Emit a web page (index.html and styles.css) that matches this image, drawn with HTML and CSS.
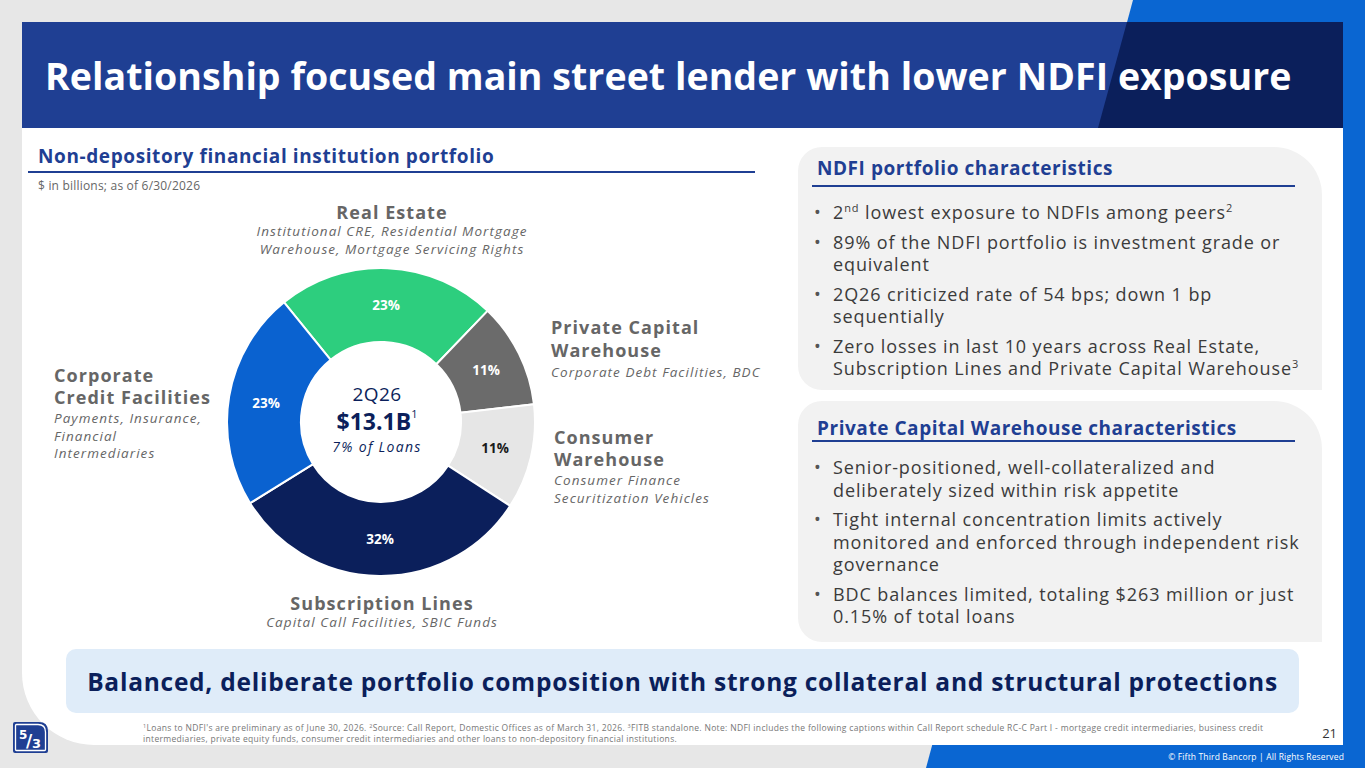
FILE: index.html
```html
<!DOCTYPE html>
<html lang="en">
<head>
<meta charset="utf-8">
<title>Relationship focused main street lender</title>
<link rel="stylesheet" href="styles.css">
</head>
<body>
<div class="backdrop"></div>
<div class="card">
  <header class="header">
    <h1>Relationship focused main street lender with lower NDFI exposure</h1>
  </header>
  <div class="main">
    <section class="left">
      <h2 class="sec-title">Non-depository financial institution portfolio</h2>
      <p class="note">$ in billions; as of 6/30/2026</p>
      <div class="chart">
        <svg class="donut" width="320" height="320" viewBox="0 0 320 320">
          <g stroke="#fff" stroke-width="2" stroke-linejoin="round">
            <path fill="#2dce7e" d="M63.09 40.33 A154 154 0 0 1 266.58 48.84 L215.37 102.26 A80 80 0 0 0 109.66 97.83 Z"/>
            <path fill="#6b6b6b" d="M266.58 48.84 A154 154 0 0 1 312.98 142.30 L239.47 150.81 A80 80 0 0 0 215.37 102.26 Z"/>
            <path fill="#e6e6e6" d="M312.98 142.30 A154 154 0 0 1 289.16 243.87 L227.10 203.57 A80 80 0 0 0 239.47 150.81 Z"/>
            <path fill="#0b1f5b" d="M289.16 243.87 A154 154 0 0 1 29.12 241.16 L92.01 202.16 A80 80 0 0 0 227.10 203.57 Z"/>
            <path fill="#0a62d0" d="M29.12 241.16 A154 154 0 0 1 63.09 40.33 L109.66 97.83 A80 80 0 0 0 92.01 202.16 Z"/>
          </g>
          <g class="pct">
            <text x="165" y="43" fill="#fff">23%</text>
            <text x="265" y="108" fill="#fff">11%</text>
            <text x="274" y="186" fill="#1a1a1a">11%</text>
            <text x="159" y="277" fill="#fff">32%</text>
            <text x="45" y="141" fill="#fff">23%</text>
          </g>
          <text class="c-q" x="156" y="132">2Q26</text>
          <text class="c-amt" x="156" y="159">$13.1B<tspan class="c-sup" dy="-8">1</tspan></text>
          <text class="c-pct" x="156" y="184">7% of Loans</text>
        </svg>
        <div class="lbl lbl-re">
          <h4>Real Estate</h4>
          <p>Institutional CRE, Residential Mortgage<br>Warehouse, Mortgage Servicing Rights</p>
        </div>
        <div class="lbl lbl-pcw">
          <h4>Private Capital<br>Warehouse</h4>
          <p>Corporate Debt Facilities, BDC</p>
        </div>
        <div class="lbl lbl-cw">
          <h4>Consumer<br>Warehouse</h4>
          <p>Consumer Finance<br>Securitization Vehicles</p>
        </div>
        <div class="lbl lbl-ccf">
          <h4>Corporate<br>Credit Facilities</h4>
          <p>Payments, Insurance,<br>Financial<br>Intermediaries</p>
        </div>
        <div class="lbl lbl-sub">
          <h4>Subscription Lines</h4>
          <p>Capital Call Facilities, SBIC Funds</p>
        </div>
      </div>
    </section>
    <section class="right">
      <div class="panel panel-a">
        <h3>NDFI portfolio characteristics</h3>
        <ul>
          <li>2<sup>nd</sup> lowest exposure to NDFIs among peers<sup>2</sup></li>
          <li>89% of the NDFI portfolio is investment grade or<br>equivalent</li>
          <li>2Q26 criticized rate of 54 bps; down 1 bp<br>sequentially</li>
          <li>Zero losses in last 10 years across Real Estate,<br>Subscription Lines and Private Capital Warehouse<sup>3</sup></li>
        </ul>
      </div>
      <div class="panel panel-b">
        <h3>Private Capital Warehouse characteristics</h3>
        <ul>
          <li>Senior-positioned, well-collateralized and<br>deliberately sized within risk appetite</li>
          <li>Tight internal concentration limits actively<br>monitored and enforced through independent risk<br>governance</li>
          <li>BDC balances limited, totaling $263 million or just<br>0.15% of total loans</li>
        </ul>
      </div>
    </section>
  </div>
  <div class="banner">Balanced, deliberate portfolio composition with strong collateral and structural protections</div>
  <div class="foot">
    <p class="footnote"><sup>1</sup>Loans to NDFI's are preliminary as of June 30, 2026. <sup>2</sup>Source: Call Report, Domestic Offices as of March 31, 2026. <sup>3</sup>FITB standalone. Note: NDFI includes the following captions within Call Report schedule RC-C Part I - mortgage credit intermediaries, business credit<br>intermediaries, private equity funds, consumer credit intermediaries and other loans to non-depository financial institutions.</p>
    <span class="pageno">21</span>
  </div>
</div>
<div class="copyright">© Fifth Third Bancorp | All Rights Reserved</div>
<svg class="logo" width="37" height="33" viewBox="0 0 37 33">
  <path d="M1 3 Q1 1 3 1 H27 Q36 1 36 10 V30 Q36 32 34 32 H3 Q1 32 1 30 Z" fill="#1f3f93"/>
  <path d="M3.5 4.5 Q3.5 3.5 4.5 3.5 H26 Q33.5 3.5 33.5 11 V28.5 Q33.5 29.5 32.5 29.5 H4.5 Q3.5 29.5 3.5 28.5 Z" fill="none" stroke="#fff" stroke-width="1.3"/>
  <text x="7" y="18" class="lg5">5</text>
  <text x="14" y="26" class="lgs">/</text>
  <text x="20" y="27" class="lg3">3</text>
</svg>
</body>
</html>
```
FILE: styles.css
```css
* { box-sizing: border-box; }
body {
  margin: 0;
  width: 1365px;
  height: 768px;
  overflow: hidden;
  position: relative;
  background: #e7e7e7;
  font-family: "Open Sans", "Liberation Sans", sans-serif;
}
.backdrop {
  position: absolute;
  inset: 0;
  background: #0a66d2;
  clip-path: polygon(1133px 0, 1365px 0, 1365px 768px, 926px 768px);
}
.card {
  position: relative;
  margin: 22px 0 0 22px;
  width: 1321px;
  height: 723px;
  background: #fff;
  border-bottom-left-radius: 72px;
  display: flex;
  flex-direction: column;
}
.header {
  height: 106px;
  flex: none;
  background: #1f3f93;
  position: relative;
  display: flex;
  align-items: center;
  padding-left: 23px;
  overflow: hidden;
}
.header::after {
  content: "";
  position: absolute;
  inset: 0;
  background: #0b1f5b;
  clip-path: polygon(1105px 0, 100% 0, 100% 100%, 1076px 100%);
}
.header h1 {
  position: relative;
  z-index: 1;
  margin: 0;
  color: #fff;
  font-size: 37.5px;
  letter-spacing: 0.05px;
  font-weight: 700;
  white-space: nowrap;
}
.main {
  display: grid;
  grid-template-columns: 727px 524px;
  column-gap: 43px;
  padding-left: 6px;
  height: 514px;
  flex: none;
}
.left { padding-top: 16px; }
.sec-title {
  margin: 0;
  font-size: 19px;
  line-height: 24px;
  letter-spacing: 0.6px;
  font-weight: 700;
  color: #1f3f93;
  padding: 0 0 3px 10px;
  border-bottom: 2px solid #1f3f93;
}
.note {
  margin: 6px 0 0 10px;
  font-size: 12px;
  line-height: 14px;
  letter-spacing: 0.2px;
  color: #666;
}
.chart {
  position: relative;
  height: 440px;
}
.donut {
  position: absolute;
  left: 193px;
  top: 69px;
}
.pct text {
  font-size: 13.5px;
  font-weight: 700;
  text-anchor: middle;
  dominant-baseline: central;
}
.c-q, .c-amt, .c-pct {
  fill: #0b1f5b;
  text-anchor: middle;
  dominant-baseline: central;
}
.c-q { font-size: 19px; letter-spacing: 0.4px; }
.c-amt { font-size: 23px; font-weight: 700; }
.c-sup { font-size: 11px; font-weight: 400; }
.c-pct { font-size: 14px; font-style: italic; letter-spacing: 1.3px; }
.lbl {
  position: absolute;
  color: #666;
  white-space: nowrap;
}
.lbl h4 {
  margin: 0;
  font-size: 18px;
  line-height: 22px;
  letter-spacing: 1.05px;
  font-weight: 700;
}
.lbl p {
  margin: 2px 0 0;
  font-size: 13.5px;
  line-height: 17.5px;
  letter-spacing: 1.05px;
  font-style: italic;
}
.lbl-re { left: 164px; top: 9px; width: 400px; text-align: center; }
.lbl-re h4 { line-height: 21px; }
.lbl-re p { margin-top: 0; }
.lbl-pcw { left: 523px; top: 123px; }
.lbl-pcw h4 { line-height: 23px; }
.lbl-cw { left: 526px; top: 233px; }
.lbl-ccf { left: 26px; top: 171px; }
.lbl-sub { left: 154px; top: 400px; width: 400px; text-align: center; }
.lbl-sub h4 { line-height: 21px; }
.lbl-sub p { margin-top: 0; }
.right {
  padding-top: 19px;
  display: flex;
  flex-direction: column;
  gap: 11px;
}
.panel {
  background: #f2f2f2;
  border-radius: 24px 48px 0 24px;
  padding: 0 27px 0 14px;
}
.panel-a { height: 243px; padding-top: 9px; }
.panel-b { height: 241px; padding-top: 15px; }
.panel h3 {
  margin: 0;
  font-size: 19px;
  line-height: 24px;
  letter-spacing: 0.55px;
  font-weight: 700;
  color: #1f3f93;
  padding: 0 0 5px 5px;
  border-bottom: 2px solid #1f3f93;
}
.panel-b h3 { padding-bottom: 0; }
.panel ul {
  list-style: none;
  margin: 14px -40px 0 0;
  padding: 0 0 0 21px;
  white-space: nowrap;
}
.panel-b ul { margin-top: 14px; }
.panel li {
  position: relative;
  font-size: 18px;
  line-height: 22.5px;
  letter-spacing: 0.9px;
  color: #3b3b3b;
  margin-bottom: 7px;
}
.panel li::before {
  content: "\2022";
  position: absolute;
  left: -19px;
  top: 0;
  color: #555;
  font-size: 18px;
  line-height: 22.5px;
}
.panel sup {
  font-size: 11px;
  line-height: 0;
  vertical-align: 7px;
}
.banner {
  margin: 7px 0 0 44px;
  width: 1233px;
  height: 64px;
  flex: none;
  border-radius: 10px;
  background: #dfecf9;
  display: flex;
  align-items: center;
  justify-content: center;
  font-size: 24.5px;
  letter-spacing: 0.75px;
  font-weight: 700;
  color: #0b1f5b;
  white-space: nowrap;
}
.foot {
  display: flex;
  padding: 9px 0 0 121px;
  flex: 1;
}
.footnote {
  margin: 0;
  font-size: 8.5px;
  line-height: 11px;
  letter-spacing: 0.33px;
  color: #777;
  white-space: nowrap;
}
.footnote sup {
  font-size: 5.5px;
  line-height: 0;
  vertical-align: 3px;
}
.pageno {
  margin-left: auto;
  padding: 4px 6px 0 0;
  font-size: 13px;
  line-height: 14px;
  color: #333;
}
.copyright {
  position: relative;
  height: 23px;
  line-height: 23px;
  text-align: right;
  padding-right: 21px;
  font-size: 8.5px;
  letter-spacing: 0.15px;
  color: #fff;
}
.logo {
  position: absolute;
  left: 12px;
  top: 721px;
}
.lg5, .lg3, .lgs {
  fill: #fff;
  font-family: "DejaVu Sans", sans-serif;
  font-weight: 700;
}
.lg5 { font-size: 12px; }
.lgs { font-size: 17px; }
.lg3 { font-size: 13px; }
```
